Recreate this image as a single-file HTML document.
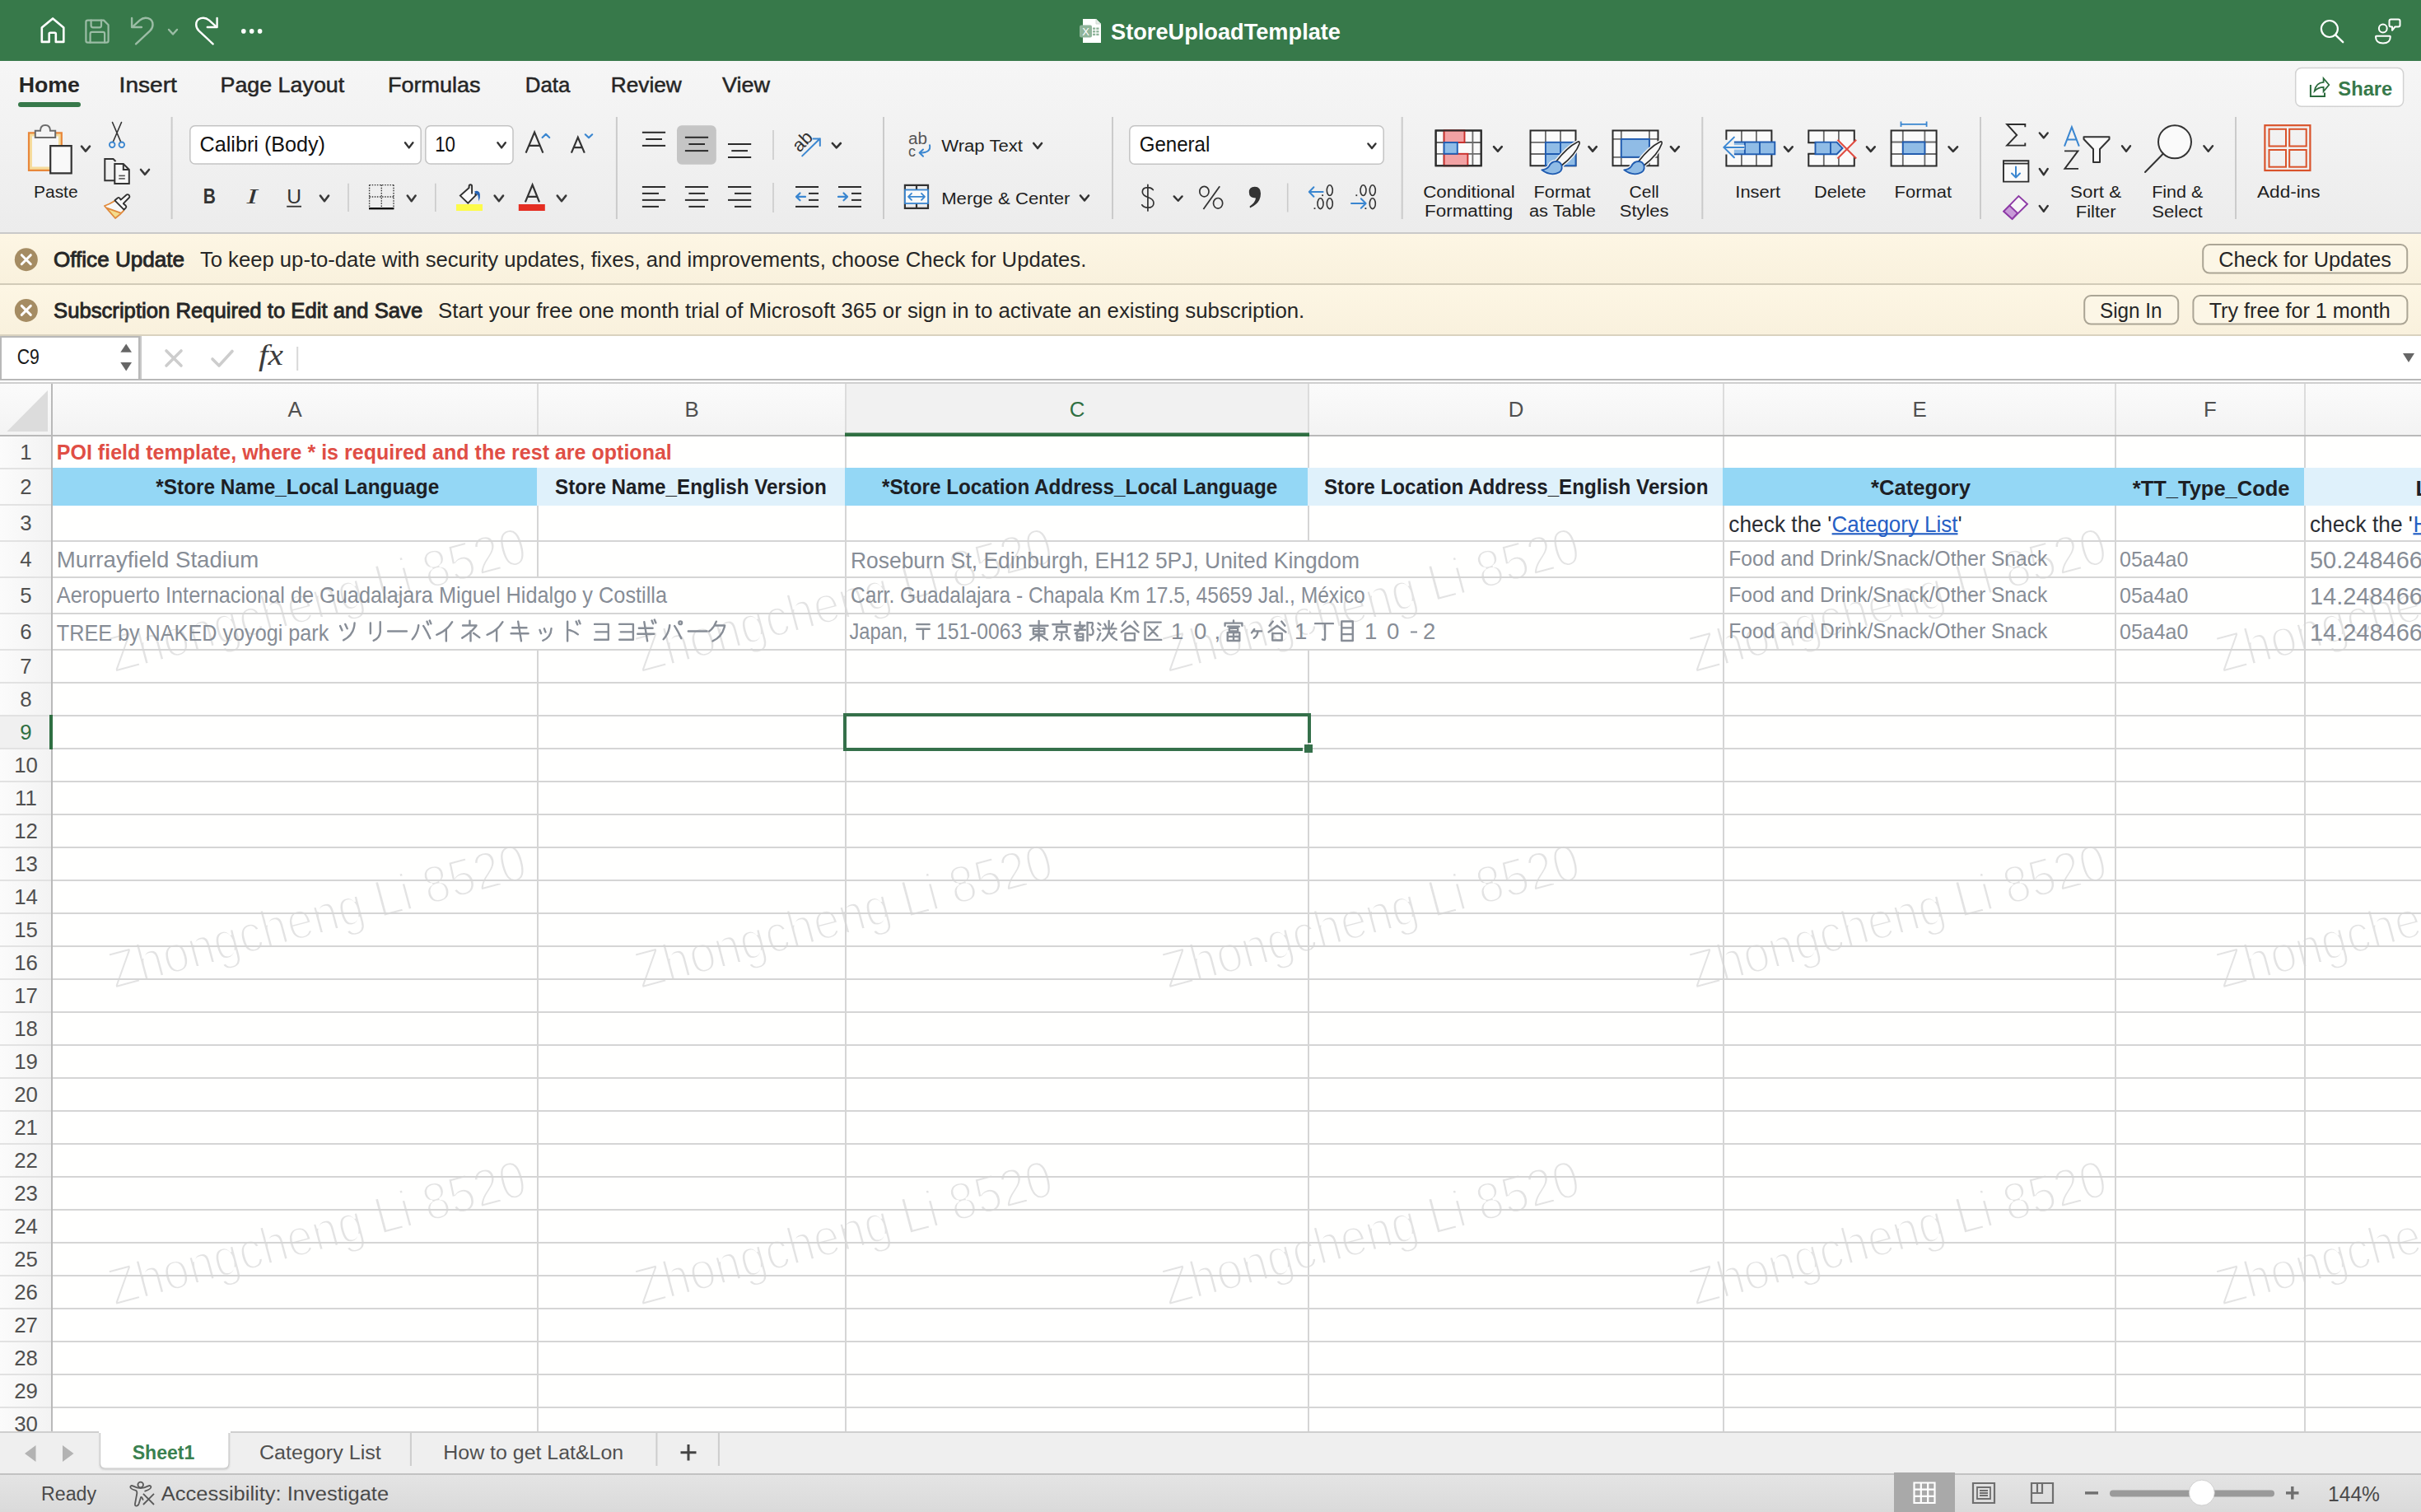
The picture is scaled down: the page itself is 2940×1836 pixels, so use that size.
<!DOCTYPE html><html><head><meta charset="utf-8"><style>html,body{margin:0;padding:0;background:#fff;overflow:hidden}svg{display:block}text{white-space:pre}</style></head><body><svg width="2940" height="1836" viewBox="0 0 2940 1836" font-family="Liberation Sans" fill="#262626"><rect x="0" y="0" width="2940" height="74" fill="#37794a" />
<path d="M50.8 50.9 V33.5 L64.1 22.4 L77.3 33.5 V50.9 H67.8 V41 Q67.8 39.7 66.5 39.7 H61 Q59.7 39.7 59.7 41 V50.9 Z" stroke="#fff" stroke-width="2.6" fill="none" stroke-linecap="round" stroke-linejoin="round"/>
<g opacity="0.5">
<path d="M106.6 24.6 H126 L131.6 30.2 V49.4 Q131.6 51.6 129.4 51.6 H106.6 Q104.4 51.6 104.4 49.4 V26.8 Q104.4 24.6 106.6 24.6 Z" stroke="#fff" stroke-width="2.2" fill="none" stroke-linecap="round" stroke-linejoin="round"/>
<path d="M110.6 24.6 V31 Q110.6 33.3 112.9 33.3 H121 Q123 33.3 123 31 V24.6" stroke="#fff" stroke-width="2.2" fill="none" stroke-linecap="round" stroke-linejoin="round"/>
<path d="M109.6 51.6 V41 Q109.6 38.9 111.7 38.9 H125 Q127.1 38.9 127.1 41 V51.6" stroke="#fff" stroke-width="2.2" fill="none" stroke-linecap="round" stroke-linejoin="round"/>
<path d="M165.1 53.4 L182.2 37.3 C184.2 35.5 185.5 33 185.5 30 C185.5 21.5 175.7 19.5 169.7 24.6 L161.2 32.3" stroke="#fff" stroke-width="2.4" fill="none" stroke-linecap="round" stroke-linejoin="round"/>
<path d="M160.1 22 V33 H171.9" stroke="#fff" stroke-width="2.4" fill="none" stroke-linecap="round" stroke-linejoin="round"/>
<path d="M205 36 L210 41.5 L215 36" stroke="#fff" stroke-width="2.4" fill="none" stroke-linecap="round" stroke-linejoin="round"/>
</g>
<path d="M258.6 53.4 L241.5 37.3 C239.5 35.5 238.2 33 238.2 30 C238.2 21.5 248 19.5 254 24.6 L262.5 32.3" stroke="#fff" stroke-width="2.4" fill="none" stroke-linecap="round" stroke-linejoin="round"/>
<path d="M263.6 22 V33 H251.8" stroke="#fff" stroke-width="2.4" fill="none" stroke-linecap="round" stroke-linejoin="round"/>
<circle cx="295.8" cy="37.9" r="2.8" fill="#fff"/>
<circle cx="305.7" cy="37.9" r="2.8" fill="#fff"/>
<circle cx="315.6" cy="37.9" r="2.8" fill="#fff"/>
<path d="M1315 23 H1331 L1337 29 V52 H1315 Z" stroke="none" stroke-width="0" fill="#fff" />
<path d="M1331 23 V29 H1337" stroke="#cfd9d2" stroke-width="1" fill="#e5ebe7" />
<rect x="1311" y="30.5" width="15" height="15" fill="#8fb49a" rx="2"/>
<text x="1314.2" y="42.5" font-size="13" fill="#fff">X</text>
<rect x="1327" y="33.5" width="3.2" height="2.4" fill="#8fb49a" />
<rect x="1331.3" y="33.5" width="3.2" height="2.4" fill="#8fb49a" />
<rect x="1327" y="37.1" width="3.2" height="2.4" fill="#8fb49a" />
<rect x="1331.3" y="37.1" width="3.2" height="2.4" fill="#8fb49a" />
<rect x="1327" y="40.7" width="3.2" height="2.4" fill="#8fb49a" />
<rect x="1331.3" y="40.7" width="3.2" height="2.4" fill="#8fb49a" />
<text x="1349.0" y="48.0" font-size="28.12" font-weight="bold" fill="#fff" textLength="279.0" lengthAdjust="spacingAndGlyphs">StoreUploadTemplate</text>
<circle cx="2828.9" cy="35" r="10" stroke="#fff" stroke-width="2.2" fill="none"/>
<path d="M2836.6 42.8 L2845.2 51.2" stroke="#fff" stroke-width="2.4" fill="none" stroke-linecap="round" stroke-linejoin="round"/>
<circle cx="2893.8" cy="34.5" r="4.9" stroke="#fff" stroke-width="2" fill="none"/>
<path d="M2885.8 43.8 H2902 Q2902.8 43.8 2902.8 44.6 Q2902.8 52.6 2893.9 52.6 Q2885 52.6 2885 44.6 Q2885 43.8 2885.8 43.8 Z" stroke="#fff" stroke-width="2" fill="none" stroke-linecap="round" stroke-linejoin="round"/>
<path d="M2903.5 23.5 H2912.5 Q2914.5 23.5 2914.5 25.5 V30.5 Q2914.5 32.5 2912.5 32.5 H2908.5 L2905 36.8 V32.5 H2903.5 Q2901.5 32.5 2901.5 30.5 V25.5 Q2901.5 23.5 2903.5 23.5 Z" stroke="#fff" stroke-width="2" fill="none" stroke-linecap="round" stroke-linejoin="round"/>
<defs><linearGradient id="rib" x1="0" y1="0" x2="0" y2="1"><stop offset="0" stop-color="#f6f6f6"/><stop offset="1" stop-color="#ececec"/></linearGradient></defs>
<rect x="0" y="74" width="2940" height="208" fill="url(#rib)" />
<rect x="0" y="282" width="2940" height="2" fill="#c9c9c9" />
<text x="22.7" y="112.0" font-size="26.67" font-weight="bold" textLength="74.3" lengthAdjust="spacingAndGlyphs">Home</text>
<text x="144.6" y="112.0" font-size="26.38" textLength="70.2" lengthAdjust="spacingAndGlyphs" stroke="#262626" stroke-width="0.5">Insert</text>
<text x="267.5" y="112.0" font-size="26.38" textLength="150.7" lengthAdjust="spacingAndGlyphs" stroke="#262626" stroke-width="0.5">Page Layout</text>
<text x="470.9" y="112.0" font-size="26.38" textLength="112.7" lengthAdjust="spacingAndGlyphs" stroke="#262626" stroke-width="0.5">Formulas</text>
<text x="637.8" y="112.0" font-size="26.38" textLength="54.5" lengthAdjust="spacingAndGlyphs" stroke="#262626" stroke-width="0.5">Data</text>
<text x="741.7" y="112.0" font-size="26.38" textLength="86.1" lengthAdjust="spacingAndGlyphs" stroke="#262626" stroke-width="0.5">Review</text>
<text x="877.0" y="112.0" font-size="26.38" textLength="58.1" lengthAdjust="spacingAndGlyphs" stroke="#262626" stroke-width="0.5">View</text>
<rect x="22" y="124" width="76" height="6" fill="#37794a" rx="3"/>
<rect x="2787.7" y="82.5" width="130.9" height="46.8" fill="#fff" rx="7" stroke="#d2d2d2" stroke-width="1.5"/>
<path d="M2805.9 103 V117 H2823 V112.5" stroke="#2a6a3c" stroke-width="2" fill="none" />
<path d="M2828.3 103 L2821.6 95.2 V99.9 Q2812.3 100.6 2810.7 110.6 Q2815 106 2821.6 105.9 V111 Z" stroke="#2a6a3c" stroke-width="1.8" fill="none" stroke-linejoin="miter"/>
<text x="2839.3" y="115.5" font-size="23.77" font-weight="bold" fill="#37794a" textLength="66.0" lengthAdjust="spacingAndGlyphs">Share</text>
<rect x="207.6" y="142" width="2" height="124" fill="#cbcbcb" />
<rect x="747.9" y="142" width="2" height="124" fill="#cbcbcb" />
<rect x="1072.0" y="142" width="2" height="124" fill="#cbcbcb" />
<rect x="1350.0" y="142" width="2" height="124" fill="#cbcbcb" />
<rect x="1701.7" y="142" width="2" height="124" fill="#cbcbcb" />
<rect x="2066.3" y="142" width="2" height="124" fill="#cbcbcb" />
<rect x="2404.0" y="142" width="2" height="124" fill="#cbcbcb" />
<rect x="2714.0" y="142" width="2" height="124" fill="#cbcbcb" />
<rect x="422.2" y="222.7" width="1.6" height="34.30000000000001" fill="#cbcbcb" />
<rect x="528.0" y="222.7" width="1.6" height="34.30000000000001" fill="#cbcbcb" />
<rect x="938.2" y="158" width="1.6" height="36" fill="#cbcbcb" />
<rect x="938.2" y="222" width="1.6" height="36" fill="#cbcbcb" />
<rect x="1562.9" y="222.5" width="1.6" height="35.0" fill="#cbcbcb" />
<path d="M35 161.3 H74.8 V206.9 H35 Z" stroke="#e8873a" stroke-width="2.2" fill="#f6dc9c" />
<rect x="39" y="165.5" width="32" height="37" fill="#f7f7f7" />
<path d="M42.8 167 V158.8 H49 Q49 152 55 152 Q61 152 61 158.8 H67.2 V167 Z" stroke="#6b6b6b" stroke-width="2" fill="#f4f4f4" />
<path d="M61.2 177.2 H86.7 V210.4 H61.2 Z" stroke="#333" stroke-width="2.2" fill="#f9f9f9" />
<path d="M99.0 177.7 L104.0 183.6 L109.0 177.7" stroke="#3a3a3a" stroke-width="2.6" fill="none" stroke-linecap="round" stroke-linejoin="round"/>
<text x="41.0" y="239.6" font-size="20.87" fill="#1e1e1e" textLength="53.6" lengthAdjust="spacingAndGlyphs">Paste</text>
<path d="M136.5 148.5 L146.8 172.5 M147.5 148.5 L137.2 172.5" stroke="#333" stroke-width="1.6" fill="none" stroke-linecap="round" stroke-linejoin="round"/>
<circle cx="136.2" cy="175.8" r="3.3" stroke="#3a86d0" stroke-width="1.8" fill="none"/>
<circle cx="147.8" cy="175.8" r="3.3" stroke="#3a86d0" stroke-width="1.8" fill="none"/>
<path d="M139.3 219.3 H127.3 V193 H137.5 L140.5 196" stroke="#333" stroke-width="2" fill="none" stroke-linejoin="miter"/>
<path d="M139.3 223 V199 H149.8 L156.8 206 V223 Z" stroke="#333" stroke-width="2" fill="#f7f7f7" />
<path d="M149.8 199 V206 H156.8" stroke="#333" stroke-width="2" fill="none" />
<rect x="144.3" y="212.6" width="7.5" height="1.6" fill="#555" />
<rect x="144.3" y="216.1" width="7.5" height="1.6" fill="#555" />
<path d="M171.0 206.0 L176.0 211.8 L181.0 206.0" stroke="#3a3a3a" stroke-width="2.6" fill="none" stroke-linecap="round" stroke-linejoin="round"/>
<path d="M139.2 243.9 Q133 247.8 126.9 250 L129.2 252.4 L146.7 258.6 L150.3 255.6 Z" stroke="none" stroke-width="0" fill="#f8f8f8" />
<path d="M129.2 252.4 L140 265 L146.7 258.6 Z" stroke="none" stroke-width="0" fill="#f4dc8c" />
<path d="M139.2 243.9 Q133 247.8 126.9 250 L140 265 Q146 260.5 150.3 255.6 M129.2 252.4 L146.7 258.6" stroke="#e08a3c" stroke-width="1.8" fill="none" stroke-linecap="round" stroke-linejoin="round"/>
<path d="M139.4 243.3 L143.1 240.2 Q144 239.4 145 240.3 L146.7 242.6 L153.7 236.5 Q155 235.5 156.5 236.8 L157 237.4 Q158 238.8 156.8 240 L149.8 247.2 L152.8 249.8 Q154 251 152.8 252.4 L150.6 254.7 Z" stroke="#2e2e2e" stroke-width="1.8" fill="#f8f8f8" stroke-linecap="round" stroke-linejoin="round"/>
<rect x="230.8" y="152.8" width="280.4" height="46.2" fill="#fff" rx="6" stroke="#c4c4c4" stroke-width="1.5"/>
<text x="242.6" y="184.0" font-size="24.93" fill="#111" textLength="152.4" lengthAdjust="spacingAndGlyphs">Calibri (Body)</text>
<path d="M492.0 173.2 L496.7 179.4 L501.4 173.2" stroke="#333" stroke-width="2.4" fill="none" stroke-linecap="round" stroke-linejoin="round"/>
<rect x="516.8" y="152.8" width="106.2" height="46.2" fill="#fff" rx="6" stroke="#c4c4c4" stroke-width="1.5"/>
<text x="528.2" y="184.0" font-size="24.93" fill="#111" textLength="24.8" lengthAdjust="spacingAndGlyphs">10</text>
<path d="M604.4 173.2 L609.1 179.4 L613.8 173.2" stroke="#333" stroke-width="2.4" fill="none" stroke-linecap="round" stroke-linejoin="round"/>
<path d="M638.6 185.6 L649.1 160.6 L659.4 185.6 M642.2 176.9 H656" stroke="#333" stroke-width="2.2" fill="none" stroke-linejoin="miter"/>
<path d="M658.6 167 L662.9 162.9 L667.2 167" stroke="#3a86d0" stroke-width="2.2" fill="none" stroke-linecap="round" stroke-linejoin="round"/>
<path d="M693.9 185.6 L701.8 166.8 L709.8 185.6 M696.7 179.1 H707" stroke="#333" stroke-width="2.2" fill="none" stroke-linejoin="miter"/>
<path d="M710.8 163.3 L715 167.3 L719.2 163.3" stroke="#3a86d0" stroke-width="2.2" fill="none" stroke-linecap="round" stroke-linejoin="round"/>
<text x="246.8" y="247.4" font-size="24.93" font-weight="bold" fill="#333" textLength="15.1" lengthAdjust="spacingAndGlyphs">B</text>
<text x="299.5" y="247.4" font-size="24.93" font-family="Liberation Serif" font-style="italic" fill="#333" textLength="13.3" lengthAdjust="spacingAndGlyphs">I</text>
<text x="348.2" y="247.4" font-size="24.64" fill="#333" textLength="17.8" lengthAdjust="spacingAndGlyphs">U</text>
<rect x="348.2" y="249.8" width="17.8" height="1.8" fill="#333" />
<path d="M389.0 237.6 L394.0 244.2 L399.0 237.6" stroke="#3a3a3a" stroke-width="2.6" fill="none" stroke-linecap="round" stroke-linejoin="round"/>
<g stroke="#333" stroke-width="1.4" stroke-dasharray="1.5 1.6" fill="none">
<path d="M448.6 224.6 H478 M448.6 239 H478 M448.6 224.6 V253 M463.3 224.6 V253 M478 224.6 V253"/>
</g>
<rect x="448" y="252" width="30.4" height="2.4" fill="#111" />
<path d="M494.8 237.6 L499.7 244.2 L504.6 237.6" stroke="#3a3a3a" stroke-width="2.6" fill="none" stroke-linecap="round" stroke-linejoin="round"/>
<path d="M569.4 228.3 L558.9 237.6 L568.3 246.6 L578.3 236.6 L576.6 235" stroke="#2e2e2e" stroke-width="1.9" fill="#f9f9f9" stroke-linejoin="miter"/>
<path d="M569.6 228.8 V226.3 Q569.6 224.3 571.3 224.3 Q573.1 224.3 573.1 226.3 V235.6" stroke="#2e2e2e" stroke-width="1.9" fill="none" />
<path d="M576.2 232.6 Q579.5 230.3 582.1 233.5 Q583.6 236 582.8 240 L581.5 244.6 Q580.9 239.5 580.4 237.4 Q579.6 235.1 577.1 234.9 Z" stroke="none" stroke-width="0" fill="#2462b5" />
<rect x="554" y="248" width="32" height="8" fill="#fdfb4a" />
<path d="M600.7 237.6 L605.9 244.2 L611.0 237.6" stroke="#3a3a3a" stroke-width="2.6" fill="none" stroke-linecap="round" stroke-linejoin="round"/>
<path d="M637.9 245.3 L646.6 224.5 L655 245.3 M640.8 238.8 H652.2" stroke="#333" stroke-width="2.2" fill="none" stroke-linejoin="miter"/>
<rect x="629.8" y="248" width="32" height="8" fill="#e52e22" />
<path d="M676.8 237.6 L682.0 244.2 L687.2 237.6" stroke="#3a3a3a" stroke-width="2.6" fill="none" stroke-linecap="round" stroke-linejoin="round"/>
<rect x="822" y="152.2" width="47.8" height="47.6" fill="#c5c5c5" rx="6"/>
<rect x="779.9" y="159.8" width="28.200000000000045" height="2" fill="#2b2b2b" />
<rect x="784.2" y="168" width="19.799999999999955" height="2" fill="#2b2b2b" />
<rect x="779.9" y="175.9" width="28.200000000000045" height="2" fill="#2b2b2b" />
<rect x="831.9" y="165.8" width="28.200000000000045" height="2" fill="#2b2b2b" />
<rect x="836.4" y="174" width="19.600000000000023" height="2" fill="#2b2b2b" />
<rect x="831.9" y="182.1" width="28.200000000000045" height="2" fill="#2b2b2b" />
<rect x="884" y="174" width="28.200000000000045" height="2" fill="#2b2b2b" />
<rect x="888.3" y="182.1" width="19.700000000000045" height="2" fill="#2b2b2b" />
<rect x="884" y="190" width="28.200000000000045" height="2" fill="#2b2b2b" />
<rect x="779.9" y="226" width="28.200000000000045" height="2" fill="#2b2b2b" />
<rect x="779.9" y="233.9" width="20.100000000000023" height="2" fill="#2b2b2b" />
<rect x="779.9" y="241.9" width="28.200000000000045" height="2" fill="#2b2b2b" />
<rect x="779.9" y="249.9" width="20.100000000000023" height="2" fill="#2b2b2b" />
<rect x="831.9" y="226" width="28.200000000000045" height="2" fill="#2b2b2b" />
<rect x="836.4" y="233.9" width="19.600000000000023" height="2" fill="#2b2b2b" />
<rect x="831.9" y="241.9" width="28.200000000000045" height="2" fill="#2b2b2b" />
<rect x="836.4" y="249.9" width="19.600000000000023" height="2" fill="#2b2b2b" />
<rect x="884" y="226" width="28.200000000000045" height="2" fill="#2b2b2b" />
<rect x="892" y="233.9" width="20.200000000000045" height="2" fill="#2b2b2b" />
<rect x="884" y="241.9" width="28.200000000000045" height="2" fill="#2b2b2b" />
<rect x="892" y="249.9" width="20.200000000000045" height="2" fill="#2b2b2b" />
<g transform="translate(975 171.5) rotate(-45)"><text x="-13" y="7" font-size="22" fill="#333" textLength="25" lengthAdjust="spacingAndGlyphs">ab</text></g>
<path d="M974.2 189.4 L995.8 168.3 M987.5 168.6 H995.8 V177" stroke="#3a86d0" stroke-width="2" fill="none" stroke-linecap="round" stroke-linejoin="round"/>
<path d="M1010.9 174.0 L1015.8 179.4 L1020.8 174.0" stroke="#333" stroke-width="2.6" fill="none" stroke-linecap="round" stroke-linejoin="round"/>
<rect x="966" y="226" width="28" height="2" fill="#2b2b2b" />
<rect x="982" y="233.9" width="12" height="2" fill="#2b2b2b" />
<rect x="982" y="241.9" width="12" height="2" fill="#2b2b2b" />
<rect x="966" y="249.9" width="28" height="2" fill="#2b2b2b" />
<path d="M978 238.9 H967.5 M971.5 234.5 L967 238.9 L971.5 243.3" stroke="#3a86d0" stroke-width="2.2" fill="none" stroke-linecap="round" stroke-linejoin="round"/>
<rect x="1018" y="226" width="28" height="2" fill="#2b2b2b" />
<rect x="1034" y="233.9" width="12" height="2" fill="#2b2b2b" />
<rect x="1034" y="241.9" width="12" height="2" fill="#2b2b2b" />
<rect x="1018" y="249.9" width="28" height="2" fill="#2b2b2b" />
<path d="M1018 238.9 H1028.5 M1024.5 234.5 L1029 238.9 L1024.5 243.3" stroke="#3a86d0" stroke-width="2.2" fill="none" stroke-linecap="round" stroke-linejoin="round"/>
<text x="1103.0" y="175.0" font-size="19.57" fill="#555" textLength="23.0" lengthAdjust="spacingAndGlyphs">ab</text>
<text x="1103.0" y="189.6" font-size="19" fill="#555" textLength="9.0" lengthAdjust="spacingAndGlyphs">c</text>
<path d="M1129 176.3 Q1131 185.5 1117 185.6 M1121 181.5 L1116.6 185.6 L1121 189.7" stroke="#3a86d0" stroke-width="2" fill="none" stroke-linecap="round" stroke-linejoin="round"/>
<text x="1143.2" y="183.6" font-size="20.72" fill="#1e1e1e" textLength="98.8" lengthAdjust="spacingAndGlyphs">Wrap Text</text>
<path d="M1255.2 174.0 L1260.1 180.0 L1265.0 174.0" stroke="#333" stroke-width="2.6" fill="none" stroke-linecap="round" stroke-linejoin="round"/>
<path d="M1098.9 224.8 H1127 V252.9 H1098.9 Z M1113 224.8 V230.5 M1113 247 V252.9" stroke="#333" stroke-width="2.2" fill="none" />
<rect x="1099" y="230.5" width="28" height="16.5" fill="#fafafa" stroke="#3a86d0" stroke-width="1.8"/>
<path d="M1103 238.8 H1123 M1107 234.8 L1103 238.8 L1107 242.8 M1119 234.8 L1123 238.8 L1119 242.8" stroke="#3a86d0" stroke-width="1.8" fill="none" stroke-linecap="round" stroke-linejoin="round"/>
<text x="1143.2" y="247.7" font-size="21.01" fill="#1e1e1e" textLength="156.2" lengthAdjust="spacingAndGlyphs">Merge &amp; Center</text>
<path d="M1312.0 237.5 L1317.0 243.4 L1322.0 237.5" stroke="#333" stroke-width="2.6" fill="none" stroke-linecap="round" stroke-linejoin="round"/>
<rect x="1371.8" y="152.8" width="308.4" height="46.5" fill="#fff" rx="6" stroke="#c4c4c4" stroke-width="1.5"/>
<text x="1383.8" y="184.2" font-size="25.22" fill="#111" textLength="85.5" lengthAdjust="spacingAndGlyphs">General</text>
<path d="M1661.4 174.5 L1666.0 180.0 L1670.5 174.5" stroke="#333" stroke-width="2.4" fill="none" stroke-linecap="round" stroke-linejoin="round"/>
<path d="M1400.3 230.5 Q1398 227.6 1393.9 227.6 Q1387.3 227.6 1387.3 233 Q1387.3 237.2 1394 239.5 Q1401 241.8 1401 246.5 Q1401 252.2 1393.9 252.2 Q1389 252.2 1386.8 248.8 M1393.9 224.3 V255.9" stroke="#333" stroke-width="1.7" fill="none" stroke-linecap="round" stroke-linejoin="round"/>
<path d="M1425.7 238.4 L1430.7 243.8 L1435.6 238.4" stroke="#333" stroke-width="2.4" fill="none" stroke-linecap="round" stroke-linejoin="round"/>
<ellipse cx="1462.4" cy="232.6" rx="5.6" ry="6.3" stroke="#333" stroke-width="1.7" fill="none"/><ellipse cx="1479.1" cy="246.8" rx="5.6" ry="6.3" stroke="#333" stroke-width="1.7" fill="none"/>
<path d="M1481.2 226.2 L1461.4 254" stroke="#333" stroke-width="1.8" fill="none" />
<path d="M1523.6 226.8 Q1531 226.8 1531 235 Q1531 247 1518 252.4 L1517.6 250.6 Q1524.5 246 1525 240.6 Q1516.8 240.6 1516.8 233.6 Q1516.8 226.8 1523.6 226.8 Z" stroke="none" stroke-width="0" fill="#333" />
<ellipse cx="1614.8" cy="231.1" rx="3.5" ry="6.4" stroke="#333" stroke-width="1.6" fill="none"/>
<rect x="1605.2" y="236.3" width="1.8" height="1.8" fill="#333" />
<rect x="1595.6" y="252.2" width="1.8" height="1.8" fill="#333" />
<ellipse cx="1603.5" cy="247.2" rx="3.5" ry="6.4" stroke="#333" stroke-width="1.6" fill="none"/><ellipse cx="1614.8" cy="247.2" rx="3.5" ry="6.4" stroke="#333" stroke-width="1.6" fill="none"/>
<path d="M1606.6 233 H1590.2 M1595.4 227.3 L1589.8 233 L1595.4 238.7" stroke="#3a86d0" stroke-width="2" fill="none" stroke-linecap="round" stroke-linejoin="round"/>
<rect x="1646.4" y="236.3" width="1.8" height="1.8" fill="#333" />
<ellipse cx="1655.5" cy="231.1" rx="3.5" ry="6.4" stroke="#333" stroke-width="1.6" fill="none"/><ellipse cx="1666.8" cy="231.1" rx="3.5" ry="6.4" stroke="#333" stroke-width="1.6" fill="none"/>
<rect x="1657.5" y="252.2" width="1.8" height="1.8" fill="#333" />
<ellipse cx="1666.8" cy="247.2" rx="3.5" ry="6.4" stroke="#333" stroke-width="1.6" fill="none"/>
<path d="M1641 247 H1658.4 M1652.8 241.3 L1658.6 247 L1652.8 252.7" stroke="#3a86d0" stroke-width="2" fill="none" stroke-linecap="round" stroke-linejoin="round"/>
<rect x="1743.6" y="158.4" width="55.100000000000136" height="42.900000000000006" fill="#fafafa" />
<path d=" M1753.6 158.4 V201.3 M1788.4 158.4 V201.3 M1743.6 173 H1798.7 M1743.6 186.8 H1798.7" stroke="#6b6b6b" stroke-width="1.8" fill="none" />
<path d="M1743.6 158.4 H1798.7 V201.3 H1743.6 Z" stroke="#2b2b2b" stroke-width="2" fill="none" />
<rect x="1753.6" y="158.4" width="24.9" height="14.6" fill="#f2a2a4" stroke="#c9302c" stroke-width="1.9"/>
<rect x="1753.6" y="186.8" width="28.8" height="14.5" fill="#f2a2a4" stroke="#c9302c" stroke-width="1.9"/>
<rect x="1753.6" y="173" width="16.2" height="13.8" fill="#8fbde8" stroke="#1f5fb5" stroke-width="1.9"/>
<path d="M1743.6 158.4 H1798.7 V201.3 H1743.6 Z" stroke="#2b2b2b" stroke-width="2" fill="none" />
<path d="M1814.0 178.2 L1818.9 183.7 L1823.8 178.2" stroke="#333" stroke-width="2.6" fill="none" stroke-linecap="round" stroke-linejoin="round"/>
<text x="1728.3" y="239.7" font-size="20.58" fill="#1e1e1e" textLength="111.4" lengthAdjust="spacingAndGlyphs">Conditional</text>
<text x="1730.0" y="263.2" font-size="20.58" fill="#1e1e1e" textLength="107.3" lengthAdjust="spacingAndGlyphs">Formatting</text>
<rect x="1858.5" y="158.6" width="55.0" height="42.599999999999994" fill="#fafafa" />
<path d=" M1876.9 158.6 V201.2 M1895 158.6 V201.2 M1858.5 172.8 H1913.5 M1858.5 187 H1913.5" stroke="#6b6b6b" stroke-width="1.8" fill="none" />
<path d="M1858.5 158.6 H1913.5 V201.2 H1858.5 Z" stroke="#2b2b2b" stroke-width="2" fill="none" />
<rect x="1876.9" y="172.8" width="36.6" height="28.4" fill="#90bce6" stroke="#1f5bb0" stroke-width="1.9"/>
<path d="M1895 172.8 V201.2 M1876.9 187 H1913.5" stroke="#1f5bb0" stroke-width="1.9" fill="none" />
<path d="M1889.8 196 Q1903.5 178.5 1915.5 172.5 Q1918.8 170.6 1918 174.5 Q1913.5 187.5 1896.3 201 Z M1896.5 201 Q1898 208.5 1890 210.7 Q1881 213 1872.2 206.3 Q1878 206 1881 202 Q1884 196 1889.5 196 Q1895 196 1896.5 201 Z" stroke="#f4f4f4" stroke-width="4.5" fill="#f4f4f4" stroke-linecap="round" stroke-linejoin="round"/>
<path d="M1889.8 196 Q1903.5 178.5 1915.5 172.5 Q1918.8 170.6 1918 174.5 Q1913.5 187.5 1896.3 201 Z" stroke="#2b2b2b" stroke-width="1.7" fill="#f8f8f8" stroke-linecap="round" stroke-linejoin="round"/>
<path d="M1896.5 201 Q1898 208.5 1890 210.7 Q1881 213 1872.2 206.3 Q1878 206 1881 202 Q1884 196 1889.5 196 Q1895 196 1896.5 201 Z" stroke="#1f5bb0" stroke-width="1.8" fill="#90bce6" stroke-linecap="round" stroke-linejoin="round"/>
<path d="M1929.4 178.2 L1934.1 183.7 L1938.8 178.2" stroke="#333" stroke-width="2.6" fill="none" stroke-linecap="round" stroke-linejoin="round"/>
<text x="1862.5" y="239.7" font-size="20.58" fill="#1e1e1e" textLength="69.0" lengthAdjust="spacingAndGlyphs">Format</text>
<text x="1857.0" y="263.2" font-size="20.58" fill="#1e1e1e" textLength="80.8" lengthAdjust="spacingAndGlyphs">as Table</text>
<rect x="1958.5" y="158.6" width="55.0" height="42.599999999999994" fill="#fafafa" />
<path d=" M1968.8 158.6 V201.2 M2002.9 158.6 V201.2 M1958.5 168.9 H2013.5 M1958.5 190.8 H2013.5" stroke="#6b6b6b" stroke-width="1.8" fill="none" />
<path d="M1958.5 158.6 H2013.5 V201.2 H1958.5 Z" stroke="#2b2b2b" stroke-width="2" fill="none" />
<rect x="1968.8" y="168.9" width="34.1" height="21.9" fill="#90bce6" stroke="#1f5bb0" stroke-width="1.9"/>
<path d="M1989.8 196 Q2003.5 178.5 2015.5 172.5 Q2018.8 170.6 2018 174.5 Q2013.5 187.5 1996.3 201 Z M1996.5 201 Q1998 208.5 1990 210.7 Q1981 213 1972.2 206.3 Q1978 206 1981 202 Q1984 196 1989.5 196 Q1995 196 1996.5 201 Z" stroke="#f4f4f4" stroke-width="4.5" fill="#f4f4f4" stroke-linecap="round" stroke-linejoin="round"/>
<path d="M1989.8 196 Q2003.5 178.5 2015.5 172.5 Q2018.8 170.6 2018 174.5 Q2013.5 187.5 1996.3 201 Z" stroke="#2b2b2b" stroke-width="1.7" fill="#f8f8f8" stroke-linecap="round" stroke-linejoin="round"/>
<path d="M1996.5 201 Q1998 208.5 1990 210.7 Q1981 213 1972.2 206.3 Q1978 206 1981 202 Q1984 196 1989.5 196 Q1995 196 1996.5 201 Z" stroke="#1f5bb0" stroke-width="1.8" fill="#90bce6" stroke-linecap="round" stroke-linejoin="round"/>
<path d="M2029.0 178.2 L2033.9 183.7 L2038.8 178.2" stroke="#333" stroke-width="2.6" fill="none" stroke-linecap="round" stroke-linejoin="round"/>
<text x="1978.6" y="239.7" font-size="20.58" fill="#1e1e1e" textLength="36.1" lengthAdjust="spacingAndGlyphs">Cell</text>
<text x="1966.8" y="263.2" font-size="20.58" fill="#1e1e1e" textLength="59.7" lengthAdjust="spacingAndGlyphs">Styles</text>
<rect x="2096.4" y="158.5" width="55.0" height="42.900000000000006" fill="#fafafa" />
<path d=" M2114.9 158.5 V201.4 M2132.9 158.5 V201.4" stroke="#6b6b6b" stroke-width="1.8" fill="none" />
<path d="M2096.4 158.5 H2151.4 V201.4 H2096.4 Z" stroke="#2b2b2b" stroke-width="2" fill="none" />
<rect x="2104.3" y="172.5" width="51" height="14.8" fill="#90bce6" stroke="#1f5bb0" stroke-width="1.9"/>
<path d="M2118.9 172.5 V187.3 M2137 172.5 V187.3" stroke="#1f5bb0" stroke-width="1.9" fill="none" />
<path d="M2105.9 165.5 L2093 178.9 L2105.9 192.3 Z" stroke="none" stroke-width="0" fill="#f1f1f1" />
<rect x="2094.5" y="169.8" width="4" height="17.7" fill="#f1f1f1" />
<rect x="2100" y="176.2" width="18.5" height="5.4" fill="#f4f4f4" />
<path d="M2117.8 178.9 H2093.3 M2105.9 166.6 L2093.3 178.9 L2105.9 191.2" stroke="#3b87d2" stroke-width="2" fill="none" stroke-linecap="round" stroke-linejoin="round"/>
<path d="M2167.0 178.3 L2171.8 183.8 L2176.7 178.3" stroke="#333" stroke-width="2.6" fill="none" stroke-linecap="round" stroke-linejoin="round"/>
<text x="2107.3" y="239.8" font-size="21.01" fill="#1e1e1e" textLength="54.9" lengthAdjust="spacingAndGlyphs">Insert</text>
<rect x="2196.3" y="158.5" width="55.5" height="42.900000000000006" fill="#fafafa" />
<path d=" M2214.8 158.5 V201.4 M2232.9 158.5 V201.4" stroke="#6b6b6b" stroke-width="1.8" fill="none" />
<path d="M2196.3 158.5 H2251.8 V201.4 H2196.3 Z" stroke="#2b2b2b" stroke-width="2" fill="none" />
<rect x="2194.8" y="173.2" width="9.5" height="13.6" fill="#f1f1f1" />
<path d="M2195.3 173.3 H2204.5 M2195.3 186.8 H2204.5" stroke="#2b2b2b" stroke-width="2" fill="none" />
<path d="M2229 168 L2256 194 L2256 168 L2229 194 Z" stroke="none" stroke-width="0" fill="#f1f1f1" />
<path d="M2204.5 172.6 H2230.5 L2237.5 180 L2230.5 187.2 H2204.5 Z M2223 172.6 V187.2" stroke="#1f5bb0" stroke-width="1.9" fill="#90bce6" />
<path d="M2231.5 169.8 L2254.2 192.5 M2254.2 169.8 L2231.5 192.5" stroke="#e04b40" stroke-width="2" fill="none" />
<path d="M2267.0 178.3 L2271.8 183.8 L2276.7 178.3" stroke="#333" stroke-width="2.6" fill="none" stroke-linecap="round" stroke-linejoin="round"/>
<text x="2203.0" y="239.8" font-size="21.01" fill="#1e1e1e" textLength="63.0" lengthAdjust="spacingAndGlyphs">Delete</text>
<rect x="2296.6" y="158.5" width="55.0" height="42.900000000000006" fill="#fafafa" />
<path d=" M2310.8 158.5 V201.4 M2337.4 158.5 V201.4 M2296.6 172.5 H2351.6 M2296.6 187 H2351.6" stroke="#6b6b6b" stroke-width="1.8" fill="none" />
<path d="M2296.6 158.5 H2351.6 V201.4 H2296.6 Z" stroke="#2b2b2b" stroke-width="2" fill="none" />
<rect x="2310.8" y="172.5" width="26.6" height="14.5" fill="#90bce6" stroke="#1f5bb0" stroke-width="1.9"/>
<path d="M2308.5 150.8 H2339.6 M2308.5 147.5 V154 M2339.6 147.5 V154" stroke="#3a86d0" stroke-width="1.8" fill="none" />
<path d="M2366.6 178.3 L2371.8 183.8 L2377.0 178.3" stroke="#333" stroke-width="2.6" fill="none" stroke-linecap="round" stroke-linejoin="round"/>
<text x="2300.6" y="239.8" font-size="21.01" fill="#1e1e1e" textLength="69.4" lengthAdjust="spacingAndGlyphs">Format</text>
<path d="M2459.3 154.3 V151 H2437.2 L2449.2 164 L2437.2 176.6 H2459.3 V173.4" stroke="#2e2e2e" stroke-width="1.9" fill="none" />
<path d="M2476.8 161.5 L2481.8 167.4 L2486.7 161.5" stroke="#333" stroke-width="2.4" fill="none" stroke-linecap="round" stroke-linejoin="round"/>
<path d="M2433 195.2 H2463.4 V220.6 H2433 Z M2433 198.6 H2463.4" stroke="#2e2e2e" stroke-width="1.9" fill="#fafafa" />
<path d="M2448 202.5 V215 M2443 210.5 L2448 215.5 L2453 210.5" stroke="#3a86d0" stroke-width="2" fill="none" stroke-linecap="round" stroke-linejoin="round"/>
<path d="M2476.8 205.0 L2481.8 212.3 L2486.7 205.0" stroke="#333" stroke-width="2.4" fill="none" stroke-linecap="round" stroke-linejoin="round"/>
<path d="M2433.3 256.6 L2451.4 238 L2462 247.8 L2443.6 266 Z" stroke="#8d3aa6" stroke-width="1.9" fill="#f7f7f7" stroke-linejoin="miter"/>
<path d="M2433.3 256.6 L2440.3 249.6 L2450 258.8 L2443.6 266 Z" stroke="#8d3aa6" stroke-width="1.9" fill="#c89ad8" stroke-linejoin="miter"/>
<path d="M2476.8 250.0 L2481.8 256.7 L2486.7 250.0" stroke="#333" stroke-width="2.4" fill="none" stroke-linecap="round" stroke-linejoin="round"/>
<path d="M2507 177.6 L2515.9 154.4 L2524.8 177.6 M2510.3 169.6 H2521.5" stroke="#3a86d0" stroke-width="2" fill="none" stroke-linejoin="miter"/>
<path d="M2507 183.4 H2523.4 L2507.4 204.9 H2524" stroke="#2e2e2e" stroke-width="1.9" fill="none" stroke-linejoin="miter"/>
<path d="M2530.5 166.3 H2561.5 V169 L2550 181 V197 H2542 V181 L2530.5 169 Z" stroke="#333" stroke-width="2" fill="#fafafa" stroke-linejoin="round"/>
<path d="M2577.0 177.3 L2582.0 183.8 L2587.0 177.3" stroke="#333" stroke-width="2.4" fill="none" stroke-linecap="round" stroke-linejoin="round"/>
<text x="2514.0" y="239.8" font-size="21.01" fill="#1e1e1e" textLength="62.2" lengthAdjust="spacingAndGlyphs">Sort &amp;</text>
<text x="2520.7" y="263.5" font-size="21.01" fill="#1e1e1e" textLength="48.9" lengthAdjust="spacingAndGlyphs">Filter</text>
<circle cx="2641" cy="172.3" r="20" stroke="#333" stroke-width="2" fill="#fafafa"/>
<path d="M2627 186.5 L2605 209" stroke="#333" stroke-width="2" fill="none" stroke-linecap="round" stroke-linejoin="round"/>
<path d="M2676.4 177.3 L2681.7 183.8 L2687.0 177.3" stroke="#333" stroke-width="2.4" fill="none" stroke-linecap="round" stroke-linejoin="round"/>
<text x="2613.2" y="239.8" font-size="21.01" fill="#1e1e1e" textLength="62.2" lengthAdjust="spacingAndGlyphs">Find &amp;</text>
<text x="2613.2" y="263.5" font-size="21.01" fill="#1e1e1e" textLength="61.6" lengthAdjust="spacingAndGlyphs">Select</text>
<rect x="2750.4" y="152.2" width="55" height="54.8" fill="none" stroke="#d9532b" stroke-width="2.2"/>
<rect x="2755.5" y="156.8" width="20.5" height="20.7" fill="none" stroke="#d9532b" stroke-width="2"/>
<rect x="2780.2" y="156.8" width="20.5" height="20.7" fill="none" stroke="#d9532b" stroke-width="2"/>
<rect x="2755.5" y="182" width="20.5" height="20.7" fill="none" stroke="#d9532b" stroke-width="2"/>
<rect x="2780.2" y="182" width="20.5" height="20.7" fill="none" stroke="#d9532b" stroke-width="2"/>
<text x="2741.0" y="239.8" font-size="21.01" fill="#1e1e1e" textLength="76.6" lengthAdjust="spacingAndGlyphs">Add-ins</text>
<defs><linearGradient id="crm" x1="0" y1="0" x2="0" y2="1"><stop offset="0" stop-color="#fdf6e4"/><stop offset="1" stop-color="#f9f1dd"/></linearGradient></defs>
<rect x="0" y="284" width="2940" height="60" fill="url(#crm)" />
<rect x="0" y="344" width="2940" height="2" fill="#d2cbb8" />
<rect x="0" y="346" width="2940" height="60" fill="url(#crm)" />
<rect x="0" y="406" width="2940" height="2" fill="#d9d2bf" />
<circle cx="31.8" cy="315.2" r="14" fill="#a58c63"/>
<path d="M26.3 309.7 L37.3 320.7 M37.3 309.7 L26.3 320.7" stroke="#fff" stroke-width="3" fill="none" stroke-linecap="round"/>
<circle cx="31.8" cy="376.9" r="14" fill="#a58c63"/>
<path d="M26.3 371.4 L37.3 382.4 M37.3 371.4 L26.3 382.4" stroke="#fff" stroke-width="3" fill="none" stroke-linecap="round"/>
<text x="65.0" y="323.8" font-size="25.8" textLength="159.0" lengthAdjust="spacingAndGlyphs" stroke="#262626" stroke-width="0.9">Office Update</text>
<text x="242.9" y="323.6" font-size="25.8" textLength="1076.4" lengthAdjust="spacingAndGlyphs">To keep up-to-date with security updates, fixes, and improvements, choose Check for Updates.</text>
<text x="65.0" y="385.6" font-size="25.8" textLength="448.2" lengthAdjust="spacingAndGlyphs" stroke="#262626" stroke-width="0.9">Subscription Required to Edit and Save</text>
<text x="532.0" y="385.5" font-size="25.8" textLength="1052.3" lengthAdjust="spacingAndGlyphs">Start your free one month trial of Microsoft 365 or sign in to activate an existing subscription.</text>
<rect x="2675.2" y="297" width="248" height="34.6" fill="#fcf6e6" rx="8" stroke="#aba595" stroke-width="2"/>
<text x="2694.2" y="323.6" font-size="24.93" textLength="209.8" lengthAdjust="spacingAndGlyphs">Check for Updates</text>
<rect x="2531.2" y="359" width="114" height="34.6" fill="#fcf6e6" rx="8" stroke="#aba595" stroke-width="2"/>
<text x="2550.0" y="385.5" font-size="24.93" textLength="75.5" lengthAdjust="spacingAndGlyphs">Sign In</text>
<rect x="2663.4" y="359" width="260" height="34.6" fill="#fcf6e6" rx="8" stroke="#aba595" stroke-width="2"/>
<text x="2682.7" y="385.5" font-size="24.93" textLength="220.0" lengthAdjust="spacingAndGlyphs">Try free for 1 month</text>
<rect x="0" y="408" width="2940" height="52" fill="#ffffff" />
<rect x="0" y="408" width="170" height="2" fill="#b8b8b8" />
<rect x="0" y="408" width="2" height="52" fill="#b8b8b8" />
<rect x="168" y="408" width="2" height="52" fill="#b8b8b8" />
<rect x="170" y="408" width="2" height="54" fill="#c8c8c8" />
<text x="20.7" y="442.0" font-size="26.09" fill="#1a1a1a" textLength="27.2" lengthAdjust="spacingAndGlyphs">C9</text>
<path d="M146.3 427.8 L160 427.8 L153.2 417.4 Z" stroke="none" stroke-width="0" fill="#666" />
<path d="M146.3 440 L160 440 L153.2 450.4 Z" stroke="none" stroke-width="0" fill="#666" />
<path d="M202 426 L220 444 M220 426 L202 444" stroke="#cdcdcd" stroke-width="3.6" fill="none" stroke-linecap="round"/>
<path d="M258 436 L266 444 L282 426.5" stroke="#cdcdcd" stroke-width="3.6" fill="none" stroke-linecap="round" stroke-linejoin="round"/>
<text x="314.0" y="443.0" font-size="36" font-family="Liberation Serif" font-style="italic" fill="#3c3c3c" textLength="30.0" lengthAdjust="spacingAndGlyphs">fx</text>
<rect x="360.2" y="421" width="2" height="29" fill="#d8d8d8" />
<path d="M2918 429 L2932 429 L2925 440 Z" stroke="none" stroke-width="0" fill="#666" />
<rect x="0" y="460" width="2940" height="2" fill="#b8b8b8" />
<rect x="0" y="462" width="2940" height="2" fill="#ffffff" />
<rect x="0" y="464" width="2940" height="2" fill="#cfcfcf" />
<defs><linearGradient id="hdr" x1="0" y1="0" x2="0" y2="1"><stop offset="0" stop-color="#fbfbfb"/><stop offset="1" stop-color="#f3f3f3"/></linearGradient><linearGradient id="rhdr" x1="0" y1="0" x2="1" y2="0"><stop offset="0" stop-color="#fbfbfb"/><stop offset="1" stop-color="#f3f3f3"/></linearGradient></defs>
<rect x="0" y="466" width="2940" height="62" fill="url(#hdr)" />
<rect x="0" y="530" width="62" height="1208" fill="url(#rhdr)" />
<rect x="64" y="530" width="2876" height="1208" fill="#fffffe" />
<rect x="1028" y="466" width="560" height="62" fill="#f1f1f1" />
<rect x="0" y="870" width="62" height="38" fill="#f0f0f0" />
<path d="M8.4 524 L58 524 L58 474 Z" stroke="none" stroke-width="0" fill="#dcdcdc" />
<g fill="#e3e3e3" stroke="#fffffe" stroke-width="2.8">
<text x="138.7" y="817.3" font-size="64" textLength="522" lengthAdjust="spacingAndGlyphs" transform="rotate(-15 138.7 817.3)">Zhongcheng Li 8520</text>
<text x="778" y="817.3" font-size="64" textLength="522" lengthAdjust="spacingAndGlyphs" transform="rotate(-15 778 817.3)">Zhongcheng Li 8520</text>
<text x="1418" y="817.3" font-size="64" textLength="522" lengthAdjust="spacingAndGlyphs" transform="rotate(-15 1418 817.3)">Zhongcheng Li 8520</text>
<text x="2058" y="817.3" font-size="64" textLength="522" lengthAdjust="spacingAndGlyphs" transform="rotate(-15 2058 817.3)">Zhongcheng Li 8520</text>
<text x="2698" y="817.3" font-size="64" textLength="522" lengthAdjust="spacingAndGlyphs" transform="rotate(-15 2698 817.3)">Zhongcheng Li 8520</text>
<text x="138.7" y="1201" font-size="64" textLength="522" lengthAdjust="spacingAndGlyphs" transform="rotate(-15 138.7 1201)">Zhongcheng Li 8520</text>
<text x="778" y="1201" font-size="64" textLength="522" lengthAdjust="spacingAndGlyphs" transform="rotate(-15 778 1201)">Zhongcheng Li 8520</text>
<text x="1418" y="1201" font-size="64" textLength="522" lengthAdjust="spacingAndGlyphs" transform="rotate(-15 1418 1201)">Zhongcheng Li 8520</text>
<text x="2058" y="1201" font-size="64" textLength="522" lengthAdjust="spacingAndGlyphs" transform="rotate(-15 2058 1201)">Zhongcheng Li 8520</text>
<text x="2698" y="1201" font-size="64" textLength="522" lengthAdjust="spacingAndGlyphs" transform="rotate(-15 2698 1201)">Zhongcheng Li 8520</text>
<text x="138.7" y="1585.7" font-size="64" textLength="522" lengthAdjust="spacingAndGlyphs" transform="rotate(-15 138.7 1585.7)">Zhongcheng Li 8520</text>
<text x="778" y="1585.7" font-size="64" textLength="522" lengthAdjust="spacingAndGlyphs" transform="rotate(-15 778 1585.7)">Zhongcheng Li 8520</text>
<text x="1418" y="1585.7" font-size="64" textLength="522" lengthAdjust="spacingAndGlyphs" transform="rotate(-15 1418 1585.7)">Zhongcheng Li 8520</text>
<text x="2058" y="1585.7" font-size="64" textLength="522" lengthAdjust="spacingAndGlyphs" transform="rotate(-15 2058 1585.7)">Zhongcheng Li 8520</text>
<text x="2698" y="1585.7" font-size="64" textLength="522" lengthAdjust="spacingAndGlyphs" transform="rotate(-15 2698 1585.7)">Zhongcheng Li 8520</text>
</g>
<rect x="0" y="568" width="62" height="2" fill="#e2e2e2" />
<rect x="64" y="568" width="2876" height="2" fill="#d5d5d5" />
<rect x="0" y="612" width="62" height="2" fill="#e2e2e2" />
<rect x="64" y="612" width="2876" height="2" fill="#d5d5d5" />
<rect x="0" y="656" width="62" height="2" fill="#e2e2e2" />
<rect x="64" y="656" width="2876" height="2" fill="#d5d5d5" />
<rect x="0" y="700" width="62" height="2" fill="#e2e2e2" />
<rect x="64" y="700" width="2876" height="2" fill="#d5d5d5" />
<rect x="0" y="744" width="62" height="2" fill="#e2e2e2" />
<rect x="64" y="744" width="2876" height="2" fill="#d5d5d5" />
<rect x="0" y="788" width="62" height="2" fill="#e2e2e2" />
<rect x="64" y="788" width="2876" height="2" fill="#d5d5d5" />
<rect x="0" y="828" width="62" height="2" fill="#e2e2e2" />
<rect x="64" y="828" width="2876" height="2" fill="#d5d5d5" />
<rect x="0" y="868" width="62" height="2" fill="#e2e2e2" />
<rect x="64" y="868" width="2876" height="2" fill="#d5d5d5" />
<rect x="0" y="908" width="62" height="2" fill="#e2e2e2" />
<rect x="64" y="908" width="2876" height="2" fill="#d5d5d5" />
<rect x="0" y="948" width="62" height="2" fill="#e2e2e2" />
<rect x="64" y="948" width="2876" height="2" fill="#d5d5d5" />
<rect x="0" y="988" width="62" height="2" fill="#e2e2e2" />
<rect x="64" y="988" width="2876" height="2" fill="#d5d5d5" />
<rect x="0" y="1028" width="62" height="2" fill="#e2e2e2" />
<rect x="64" y="1028" width="2876" height="2" fill="#d5d5d5" />
<rect x="0" y="1068" width="62" height="2" fill="#e2e2e2" />
<rect x="64" y="1068" width="2876" height="2" fill="#d5d5d5" />
<rect x="0" y="1108" width="62" height="2" fill="#e2e2e2" />
<rect x="64" y="1108" width="2876" height="2" fill="#d5d5d5" />
<rect x="0" y="1148" width="62" height="2" fill="#e2e2e2" />
<rect x="64" y="1148" width="2876" height="2" fill="#d5d5d5" />
<rect x="0" y="1188" width="62" height="2" fill="#e2e2e2" />
<rect x="64" y="1188" width="2876" height="2" fill="#d5d5d5" />
<rect x="0" y="1228" width="62" height="2" fill="#e2e2e2" />
<rect x="64" y="1228" width="2876" height="2" fill="#d5d5d5" />
<rect x="0" y="1268" width="62" height="2" fill="#e2e2e2" />
<rect x="64" y="1268" width="2876" height="2" fill="#d5d5d5" />
<rect x="0" y="1308" width="62" height="2" fill="#e2e2e2" />
<rect x="64" y="1308" width="2876" height="2" fill="#d5d5d5" />
<rect x="0" y="1348" width="62" height="2" fill="#e2e2e2" />
<rect x="64" y="1348" width="2876" height="2" fill="#d5d5d5" />
<rect x="0" y="1388" width="62" height="2" fill="#e2e2e2" />
<rect x="64" y="1388" width="2876" height="2" fill="#d5d5d5" />
<rect x="0" y="1428" width="62" height="2" fill="#e2e2e2" />
<rect x="64" y="1428" width="2876" height="2" fill="#d5d5d5" />
<rect x="0" y="1468" width="62" height="2" fill="#e2e2e2" />
<rect x="64" y="1468" width="2876" height="2" fill="#d5d5d5" />
<rect x="0" y="1508" width="62" height="2" fill="#e2e2e2" />
<rect x="64" y="1508" width="2876" height="2" fill="#d5d5d5" />
<rect x="0" y="1548" width="62" height="2" fill="#e2e2e2" />
<rect x="64" y="1548" width="2876" height="2" fill="#d5d5d5" />
<rect x="0" y="1588" width="62" height="2" fill="#e2e2e2" />
<rect x="64" y="1588" width="2876" height="2" fill="#d5d5d5" />
<rect x="0" y="1628" width="62" height="2" fill="#e2e2e2" />
<rect x="64" y="1628" width="2876" height="2" fill="#d5d5d5" />
<rect x="0" y="1668" width="62" height="2" fill="#e2e2e2" />
<rect x="64" y="1668" width="2876" height="2" fill="#d5d5d5" />
<rect x="0" y="1708" width="62" height="2" fill="#e2e2e2" />
<rect x="64" y="1708" width="2876" height="2" fill="#d5d5d5" />
<rect x="0" y="1748" width="62" height="2" fill="#e2e2e2" />
<rect x="64" y="1748" width="2876" height="2" fill="#d5d5d5" />
<rect x="652" y="466" width="2" height="62" fill="#dcdcdc" />
<rect x="652" y="530" width="2" height="1208" fill="#d5d5d5" />
<rect x="1026" y="466" width="2" height="62" fill="#dcdcdc" />
<rect x="1026" y="530" width="2" height="1208" fill="#d5d5d5" />
<rect x="1588" y="466" width="2" height="62" fill="#dcdcdc" />
<rect x="1588" y="530" width="2" height="1208" fill="#d5d5d5" />
<rect x="2092" y="466" width="2" height="62" fill="#dcdcdc" />
<rect x="2092" y="530" width="2" height="1208" fill="#d5d5d5" />
<rect x="2568" y="466" width="2" height="62" fill="#dcdcdc" />
<rect x="2568" y="530" width="2" height="1208" fill="#d5d5d5" />
<rect x="2798" y="466" width="2" height="62" fill="#dcdcdc" />
<rect x="2798" y="530" width="2" height="1208" fill="#d5d5d5" />
<rect x="0" y="528" width="2940" height="2" fill="#b9b9b9" />
<rect x="62" y="466" width="2" height="1272" fill="#b9b9b9" />
<rect x="64" y="568" width="588" height="46" fill="#94d7f5" />
<rect x="652" y="568" width="374" height="46" fill="#dff1fb" />
<rect x="1026" y="568" width="562" height="46" fill="#94d7f5" />
<rect x="1588" y="568" width="504" height="46" fill="#dff1fb" />
<rect x="2092" y="568" width="706" height="46" fill="#94d7f5" />
<rect x="2798" y="568" width="142" height="46" fill="#dff1fb" />
<rect x="652" y="530" width="2" height="38" fill="#fffffe" />
<rect x="652" y="702" width="2" height="42" fill="#fffffe" />
<rect x="652" y="746" width="2" height="42" fill="#fffffe" />
<rect x="1588" y="658" width="2" height="42" fill="#fffffe" />
<rect x="1588" y="702" width="2" height="42" fill="#fffffe" />
<rect x="1588" y="746" width="2" height="42" fill="#fffffe" />
<rect x="60" y="868" width="4" height="42" fill="#2f6f42" />
<rect x="1026" y="525.5" width="564" height="4.5" fill="#2f6f42" />
<text x="358.0" y="506.0" font-size="25.8" fill="#505050" text-anchor="middle">A</text>
<text x="840.0" y="506.0" font-size="25.8" fill="#505050" text-anchor="middle">B</text>
<text x="1308.0" y="506.0" font-size="25.8" fill="#2f6f42" text-anchor="middle">C</text>
<text x="1841.0" y="506.0" font-size="25.8" fill="#505050" text-anchor="middle">D</text>
<text x="2331.0" y="506.0" font-size="25.8" fill="#505050" text-anchor="middle">E</text>
<text x="2684.0" y="506.0" font-size="25.8" fill="#505050" text-anchor="middle">F</text>
<text x="31.5" y="558.0" font-size="25.8" fill="#505050" text-anchor="middle">1</text>
<text x="31.5" y="600.0" font-size="25.8" fill="#505050" text-anchor="middle">2</text>
<text x="31.5" y="644.0" font-size="25.8" fill="#505050" text-anchor="middle">3</text>
<text x="31.5" y="688.0" font-size="25.8" fill="#505050" text-anchor="middle">4</text>
<text x="31.5" y="732.0" font-size="25.8" fill="#505050" text-anchor="middle">5</text>
<text x="31.5" y="776.0" font-size="25.8" fill="#505050" text-anchor="middle">6</text>
<text x="31.5" y="818.0" font-size="25.8" fill="#505050" text-anchor="middle">7</text>
<text x="31.5" y="858.0" font-size="25.8" fill="#505050" text-anchor="middle">8</text>
<text x="31.5" y="898.0" font-size="25.8" fill="#2f6f42" text-anchor="middle">9</text>
<text x="31.5" y="938.0" font-size="25.8" fill="#505050" text-anchor="middle">10</text>
<text x="31.5" y="978.0" font-size="25.8" fill="#505050" text-anchor="middle">11</text>
<text x="31.5" y="1018.0" font-size="25.8" fill="#505050" text-anchor="middle">12</text>
<text x="31.5" y="1058.0" font-size="25.8" fill="#505050" text-anchor="middle">13</text>
<text x="31.5" y="1098.0" font-size="25.8" fill="#505050" text-anchor="middle">14</text>
<text x="31.5" y="1138.0" font-size="25.8" fill="#505050" text-anchor="middle">15</text>
<text x="31.5" y="1178.0" font-size="25.8" fill="#505050" text-anchor="middle">16</text>
<text x="31.5" y="1218.0" font-size="25.8" fill="#505050" text-anchor="middle">17</text>
<text x="31.5" y="1258.0" font-size="25.8" fill="#505050" text-anchor="middle">18</text>
<text x="31.5" y="1298.0" font-size="25.8" fill="#505050" text-anchor="middle">19</text>
<text x="31.5" y="1338.0" font-size="25.8" fill="#505050" text-anchor="middle">20</text>
<text x="31.5" y="1378.0" font-size="25.8" fill="#505050" text-anchor="middle">21</text>
<text x="31.5" y="1418.0" font-size="25.8" fill="#505050" text-anchor="middle">22</text>
<text x="31.5" y="1458.0" font-size="25.8" fill="#505050" text-anchor="middle">23</text>
<text x="31.5" y="1498.0" font-size="25.8" fill="#505050" text-anchor="middle">24</text>
<text x="31.5" y="1538.0" font-size="25.8" fill="#505050" text-anchor="middle">25</text>
<text x="31.5" y="1578.0" font-size="25.8" fill="#505050" text-anchor="middle">26</text>
<text x="31.5" y="1618.0" font-size="25.8" fill="#505050" text-anchor="middle">27</text>
<text x="31.5" y="1658.0" font-size="25.8" fill="#505050" text-anchor="middle">28</text>
<text x="31.5" y="1698.0" font-size="25.8" fill="#505050" text-anchor="middle">29</text>
<text x="31.5" y="1738.0" font-size="25.8" fill="#505050" text-anchor="middle">30</text>
<text x="68.8" y="557.7" font-size="25.94" font-weight="bold" fill="#e04e45" textLength="747.0" lengthAdjust="spacingAndGlyphs">POI field template, where * is required and the rest are optional</text>
<text x="189.3" y="599.8" font-size="25.8" font-weight="bold" fill="#1d2025" textLength="344.0" lengthAdjust="spacingAndGlyphs">*Store Name_Local Language</text>
<text x="674.0" y="599.8" font-size="25.8" font-weight="bold" fill="#1d2025" textLength="329.7" lengthAdjust="spacingAndGlyphs">Store Name_English Version</text>
<text x="1071.0" y="599.8" font-size="25.8" font-weight="bold" fill="#1d2025" textLength="480.2" lengthAdjust="spacingAndGlyphs">*Store Location Address_Local Language</text>
<text x="1608.0" y="599.8" font-size="25.8" font-weight="bold" fill="#1d2025" textLength="466.4" lengthAdjust="spacingAndGlyphs">Store Location Address_English Version</text>
<text x="2272.0" y="601.3" font-size="26.52" font-weight="bold" fill="#1d2025" textLength="121.1" lengthAdjust="spacingAndGlyphs">*Category</text>
<text x="2589.8" y="601.5" font-size="26.52" font-weight="bold" fill="#1d2025" textLength="190.7" lengthAdjust="spacingAndGlyphs">*TT_Type_Code</text>
<text x="2933.6" y="601.5" font-size="26.52" font-weight="bold" fill="#1d2025">L</text>
<text x="2099.3" y="645.5" font-size="26.96" fill="#2a2d33" textLength="125.0" lengthAdjust="spacingAndGlyphs">check the &#x27;</text>
<text x="2224.6" y="645.5" font-size="26.96" fill="#2660c5" textLength="152.9" lengthAdjust="spacingAndGlyphs">Category List</text>
<rect x="2224.6" y="647.2" width="152.9" height="2.2" fill="#2660c5" />
<text x="2377.8" y="645.5" font-size="26.96" fill="#2a2d33" textLength="4.8" lengthAdjust="spacingAndGlyphs">&#x27;</text>
<text x="2804.9" y="645.5" font-size="26.96" fill="#2a2d33" textLength="125.0" lengthAdjust="spacingAndGlyphs">check the &#x27;</text>
<text x="2930.4" y="645.5" font-size="26.96" fill="#2660c5">H</text>
<rect x="2930.4" y="647.2" width="10" height="2.2" fill="#2660c5" />
<text x="68.8" y="689.3" font-size="27.54" fill="#878d96" textLength="245.5" lengthAdjust="spacingAndGlyphs">Murrayfield Stadium</text>
<text x="68.8" y="731.5" font-size="27.54" fill="#878d96" textLength="741.2" lengthAdjust="spacingAndGlyphs">Aeropuerto Internacional de Guadalajara Miguel Hidalgo y Costilla</text>
<text x="68.8" y="777.5" font-size="27.54" fill="#878d96" textLength="330.5" lengthAdjust="spacingAndGlyphs">TREE by NAKED yoyogi park</text>
<text x="1033.0" y="689.7" font-size="27.54" fill="#878d96" textLength="618.0" lengthAdjust="spacingAndGlyphs">Roseburn St, Edinburgh, EH12 5PJ, United Kingdom</text>
<text x="1033.0" y="731.6" font-size="27.54" fill="#878d96" textLength="624.6" lengthAdjust="spacingAndGlyphs">Carr. Guadalajara - Chapala Km 17.5, 45659 Jal., México</text>
<text x="1031.5" y="775.6" font-size="27.54" fill="#878d96" textLength="70.9" lengthAdjust="spacingAndGlyphs">Japan,</text>
<text x="1137.0" y="775.6" font-size="27.54" fill="#878d96" textLength="104.1" lengthAdjust="spacingAndGlyphs">151-0063</text>
<text x="2099.3" y="687.3" font-size="25.51" fill="#878d96" textLength="387.0" lengthAdjust="spacingAndGlyphs">Food and Drink/Snack/Other Snack</text>
<text x="2099.3" y="731.4" font-size="25.51" fill="#878d96" textLength="387.0" lengthAdjust="spacingAndGlyphs">Food and Drink/Snack/Other Snack</text>
<text x="2099.3" y="775.4" font-size="25.51" fill="#878d96" textLength="387.0" lengthAdjust="spacingAndGlyphs">Food and Drink/Snack/Other Snack</text>
<text x="2574.1" y="688.0" font-size="26.09" fill="#878d96" textLength="83.2" lengthAdjust="spacingAndGlyphs">05a4a0</text>
<text x="2574.1" y="731.9" font-size="26.09" fill="#878d96" textLength="83.2" lengthAdjust="spacingAndGlyphs">05a4a0</text>
<text x="2574.1" y="775.8" font-size="26.09" fill="#878d96" textLength="83.2" lengthAdjust="spacingAndGlyphs">05a4a0</text>
<text x="2804.9" y="690.3" font-size="29.57" fill="#878d96" textLength="137.0" lengthAdjust="spacingAndGlyphs">50.248466</text>
<text x="2804.9" y="734.2" font-size="29.57" fill="#878d96" textLength="137.0" lengthAdjust="spacingAndGlyphs">14.248466</text>
<text x="2804.9" y="778.2" font-size="29.57" fill="#878d96" textLength="137.0" lengthAdjust="spacingAndGlyphs">14.248466</text>
<path d="M15 28 L24 48 M38 20 L47 40 M80 15 Q78 68 30 92" transform="translate(409 752.5) scale(0.27)" stroke="#878d96" stroke-width="8.9" fill="none" stroke-linecap="round" stroke-linejoin="round"/>
<path d="M28 15 V62 M72 10 V55 Q70 82 42 94" transform="translate(442.3 752.5) scale(0.27)" stroke="#878d96" stroke-width="8.9" fill="none" stroke-linecap="round" stroke-linejoin="round"/>
<path d="M8 52 H92" transform="translate(469 752.5) scale(0.27)" stroke="#878d96" stroke-width="8.9" fill="none" stroke-linecap="round" stroke-linejoin="round"/>
<path d="M38 25 Q34 62 10 88 M60 28 Q76 52 90 84 M76 8 L82 22 M88 4 L94 18" transform="translate(498 752.5) scale(0.27)" stroke="#878d96" stroke-width="8.9" fill="none" stroke-linecap="round" stroke-linejoin="round"/>
<path d="M82 10 Q60 48 12 68 M55 42 V96" transform="translate(527 752.5) scale(0.27)" stroke="#878d96" stroke-width="8.9" fill="none" stroke-linecap="round" stroke-linejoin="round"/>
<path d="M46 4 V20 M15 26 H76 Q55 56 12 82 M50 52 V96 M63 60 L90 80" transform="translate(558 752.5) scale(0.27)" stroke="#878d96" stroke-width="8.9" fill="none" stroke-linecap="round" stroke-linejoin="round"/>
<path d="M82 10 Q60 48 12 68 M55 42 V96" transform="translate(588.3 752.5) scale(0.27)" stroke="#878d96" stroke-width="8.9" fill="none" stroke-linecap="round" stroke-linejoin="round"/>
<path d="M18 36 H82 M12 62 H90 M44 8 L58 96" transform="translate(617.3 752.5) scale(0.27)" stroke="#878d96" stroke-width="8.9" fill="none" stroke-linecap="round" stroke-linejoin="round"/>
<path d="M24 46 L30 62 M44 40 L50 56 M76 40 Q74 80 38 94" transform="translate(649 752.5) scale(0.27)" stroke="#878d96" stroke-width="8.9" fill="none" stroke-linecap="round" stroke-linejoin="round"/>
<path d="M35 8 V96 M35 44 Q62 50 82 66 M74 8 L80 22 M86 4 L92 18" transform="translate(679.7 752.5) scale(0.27)" stroke="#878d96" stroke-width="8.9" fill="none" stroke-linecap="round" stroke-linejoin="round"/>
<path d="M18 20 H80 V90 H18 M24 55 H80" transform="translate(717.2 752.5) scale(0.27)" stroke="#878d96" stroke-width="8.9" fill="none" stroke-linecap="round" stroke-linejoin="round"/>
<path d="M18 20 H80 V90 H18 M24 55 H80" transform="translate(747.3 752.5) scale(0.27)" stroke="#878d96" stroke-width="8.9" fill="none" stroke-linecap="round" stroke-linejoin="round"/>
<path d="M18 38 H80 M12 64 H86 M42 10 L56 96 M76 4 L82 18 M88 0 L94 14" transform="translate(771 752.5) scale(0.27)" stroke="#878d96" stroke-width="8.9" fill="none" stroke-linecap="round" stroke-linejoin="round"/>
<path d="M38 25 Q34 62 10 88 M60 28 Q76 52 90 84 M86 14 m-7 0 a7 7 0 1 0 14 0 a7 7 0 1 0 -14 0" transform="translate(803 752.5) scale(0.27)" stroke="#878d96" stroke-width="8.9" fill="none" stroke-linecap="round" stroke-linejoin="round"/>
<path d="M8 52 H92" transform="translate(833.7 752.5) scale(0.27)" stroke="#878d96" stroke-width="8.9" fill="none" stroke-linecap="round" stroke-linejoin="round"/>
<path d="M44 8 Q34 36 12 52 M36 26 H82 Q72 76 28 96" transform="translate(858 752.5) scale(0.27)" stroke="#878d96" stroke-width="8.9" fill="none" stroke-linecap="round" stroke-linejoin="round"/>
<path d="M15 14 H85 M15 40 H85 M50 40 V96" transform="translate(1110 755) scale(0.22)" stroke="#878d96" stroke-width="10.9" fill="none" stroke-linecap="round" stroke-linejoin="round"/>
<path d="M8 26 H92 M50 4 V96 M24 38 H76 V66 H24 Z M24 52 H76 M46 68 L10 92 M54 68 L90 92" transform="translate(1248.6 753) scale(0.26)" stroke="#878d96" stroke-width="9.2" fill="none" stroke-linecap="round" stroke-linejoin="round"/>
<path d="M50 4 V16 M8 20 H92 M26 32 H74 V56 H26 Z M50 56 V90 Q50 96 42 92 M30 68 L14 88 M70 68 L86 88" transform="translate(1276.25 753) scale(0.26)" stroke="#878d96" stroke-width="9.2" fill="none" stroke-linecap="round" stroke-linejoin="round"/>
<path d="M6 26 H52 M29 8 V44 M4 45 H54 M44 32 L8 62 M15 64 H44 V94 H15 Z M15 79 H44 M64 10 V96 M64 12 H86 Q92 16 84 36 Q96 52 88 66 Q84 72 74 68" transform="translate(1303.8999999999999 753) scale(0.26)" stroke="#878d96" stroke-width="9.2" fill="none" stroke-linecap="round" stroke-linejoin="round"/>
<path d="M8 14 L18 22 M6 40 L16 48 M4 92 L18 62 M58 4 V34 M38 18 L45 32 M78 16 L70 32 M30 40 H92 M60 40 Q55 80 28 96 M60 56 Q70 82 94 92 M84 54 L72 66" transform="translate(1331.55 753) scale(0.26)" stroke="#878d96" stroke-width="9.2" fill="none" stroke-linecap="round" stroke-linejoin="round"/>
<path d="M30 6 L14 26 M70 6 L86 26 M50 26 L10 56 M50 26 L90 56 M28 62 H72 V94 H28 Z" transform="translate(1359.1999999999998 753) scale(0.26)" stroke="#878d96" stroke-width="9.2" fill="none" stroke-linecap="round" stroke-linejoin="round"/>
<path d="M88 10 H14 V92 H90 M30 30 L72 74 M72 30 L30 74" transform="translate(1386.85 753) scale(0.26)" stroke="#878d96" stroke-width="9.2" fill="none" stroke-linecap="round" stroke-linejoin="round"/>
<text x="1422.0" y="775.6" font-size="27.54" fill="#878d96">1</text>
<text x="1450.0" y="775.6" font-size="27.54" fill="#878d96">0</text>
<text x="1474.5" y="775.6" font-size="27.54" fill="#878d96">,</text>
<path d="M50 2 V12 M10 26 V14 H90 V26 M24 30 H76 M30 38 H70 V52 H30 Z M22 58 H78 V96 H22 Z M50 58 V96 M22 77 H78" transform="translate(1485 753) scale(0.26)" stroke="#878d96" stroke-width="9.2" fill="none" stroke-linecap="round" stroke-linejoin="round"/>
<path d="M36 40 L20 62 M30 52 H80 M58 52 Q55 82 34 94" transform="translate(1516 756) scale(0.2)" stroke="#878d96" stroke-width="12.0" fill="none" stroke-linecap="round" stroke-linejoin="round"/>
<path d="M30 6 L14 26 M70 6 L86 26 M50 26 L10 56 M50 26 L90 56 M28 62 H72 V94 H28 Z" transform="translate(1538 753) scale(0.26)" stroke="#878d96" stroke-width="9.2" fill="none" stroke-linecap="round" stroke-linejoin="round"/>
<text x="1572.0" y="775.6" font-size="27.54" fill="#878d96">1</text>
<path d="M8 16 H92 M54 16 V88 Q54 96 42 90" transform="translate(1595 753) scale(0.26)" stroke="#878d96" stroke-width="9.2" fill="none" stroke-linecap="round" stroke-linejoin="round"/>
<path d="M24 6 H76 V96 H24 Z M24 36 H76 M24 66 H76" transform="translate(1623 753) scale(0.26)" stroke="#878d96" stroke-width="9.2" fill="none" stroke-linecap="round" stroke-linejoin="round"/>
<text x="1657.0" y="775.6" font-size="27.54" fill="#878d96">1</text>
<text x="1684.0" y="775.6" font-size="27.54" fill="#878d96">0</text>
<rect x="1713" y="766.5" width="8" height="2" fill="#878d96" />
<text x="1728.0" y="775.6" font-size="27.54" fill="#878d96">2</text>
<rect x="1024" y="866" width="568" height="4" fill="#35704a" />
<rect x="1024" y="866" width="4" height="46" fill="#35704a" />
<rect x="1588" y="866" width="4" height="36" fill="#35704a" />
<rect x="1024" y="908" width="558" height="4" fill="#35704a" />
<rect x="1584" y="904" width="10" height="10" fill="#35704a" />
<rect x="0" y="1738" width="2940" height="52" fill="#efefef" />
<rect x="0" y="1738" width="2940" height="2" fill="#cfcfcf" />
<path d="M43.5 1755 L30 1765 L43.5 1775 Z" stroke="none" stroke-width="0" fill="#b3b3b3" stroke-linejoin="round"/>
<path d="M76 1755 L89.5 1765 L76 1775 Z" stroke="none" stroke-width="0" fill="#b3b3b3" />
<path d="M121.5 1738 H278 V1777 Q278 1783 272 1783 H127.5 Q121.5 1783 121.5 1777 Z" fill="#fff" stroke="#c8c8c8" stroke-width="1.2" filter="url(#sh)"/>
<defs><filter id="sh" x="-5%" y="-20%" width="110%" height="140%"><feDropShadow dx="0" dy="1" stdDeviation="1" flood-color="#000" flood-opacity="0.18"/></filter></defs>
<rect x="120" y="1736" width="160" height="4" fill="#fff" />
<text x="160.7" y="1772.0" font-size="24.64" font-weight="bold" fill="#3a8150" textLength="75.7" lengthAdjust="spacingAndGlyphs">Sheet1</text>
<text x="314.9" y="1772.0" font-size="24.64" fill="#505050" textLength="147.9" lengthAdjust="spacingAndGlyphs">Category List</text>
<text x="538.3" y="1772.0" font-size="24.64" fill="#505050" textLength="218.9" lengthAdjust="spacingAndGlyphs">How to get Lat&amp;Lon</text>
<rect x="497.9" y="1740" width="2" height="40" fill="#cdcdcd" />
<rect x="796.4" y="1740" width="2" height="40" fill="#cdcdcd" />
<rect x="871.9" y="1740" width="2" height="40" fill="#cdcdcd" />
<path d="M826.5 1763.8 H845.5 M836 1754 V1773.6" stroke="#444" stroke-width="3" fill="none" />
<rect x="0" y="1789" width="2940" height="2" fill="#c2c2c2" />
<defs><linearGradient id="stb" x1="0" y1="0" x2="0" y2="1"><stop offset="0" stop-color="#e4e4e4"/><stop offset="1" stop-color="#dadada"/></linearGradient></defs>
<rect x="0" y="1791" width="2940" height="45" fill="url(#stb)" />
<text x="50.0" y="1822.1" font-size="24.64" fill="#4a4a4a" textLength="67.1" lengthAdjust="spacingAndGlyphs">Ready</text>
<circle cx="170.7" cy="1803" r="3.3" stroke="#5a5a5a" stroke-width="1.8" fill="none"/>
<path d="M170.7 1807.2 Q166 1806.8 162 1804.6 Q158.6 1803 158.3 1805.6 Q158.2 1808 165 1809.8 Q166.6 1810.5 166.3 1813.5 L164 1826 Q163.6 1828.6 165.6 1828.6 Q167.6 1828.6 168.6 1826 L171 1818.3 Q172 1816.5 173.6 1821 M170.7 1807.2 Q175.5 1806.8 179.5 1804.6 Q183 1803 183.4 1805.6 Q183.5 1808 176.2 1810.6" stroke="#5a5a5a" stroke-width="1.8" fill="none" stroke-linecap="round" stroke-linejoin="round"/>
<path d="M173.9 1813.9 L187 1827 M187 1813.9 L173.9 1827" stroke="#5a5a5a" stroke-width="1.8" fill="none" />
<text x="195.7" y="1822.1" font-size="24.64" fill="#4a4a4a" textLength="276.4" lengthAdjust="spacingAndGlyphs">Accessibility: Investigate</text>
<rect x="2300" y="1788" width="74" height="48" fill="#a9a9a9" />
<path d="M2324.5 1800.5 H2349.5 V1825 H2324.5 Z M2332.8 1800.5 V1825 M2341.2 1800.5 V1825 M2324.5 1808.7 H2349.5 M2324.5 1816.9 H2349.5" stroke="#fff" stroke-width="2.2" fill="none" />
<path d="M2396 1801 H2422 V1825 H2396 Z" stroke="#6f6f6f" stroke-width="2.2" fill="none" />
<path d="M2401 1806 H2417 V1820 H2401 Z M2404 1810 H2414 M2404 1813 H2414 M2404 1816 H2414" stroke="#6f6f6f" stroke-width="1.8" fill="none" />
<path d="M2467 1801 H2493 V1825 H2467 Z M2467 1813 H2480 V1801 M2474 1801 V1813" stroke="#6f6f6f" stroke-width="2.2" fill="none" />
<rect x="2532" y="1811.2" width="16" height="3.4" fill="#6f6f6f" />
<rect x="2562" y="1809.5" width="200" height="8" fill="#9a9a9a" rx="4"/>
<circle cx="2673.8" cy="1812.6" r="15.5" fill="#fff" stroke="#c6c6c6" stroke-width="0.8"/>
<rect x="2776" y="1811.2" width="15.5" height="3.4" fill="#6f6f6f" />
<rect x="2782.1" y="1805" width="3.4" height="15.6" fill="#6f6f6f" />
<text x="2827.0" y="1822.6" font-size="25.36" fill="#4a4a4a" textLength="63.0" lengthAdjust="spacingAndGlyphs">144%</text></svg></body></html>
